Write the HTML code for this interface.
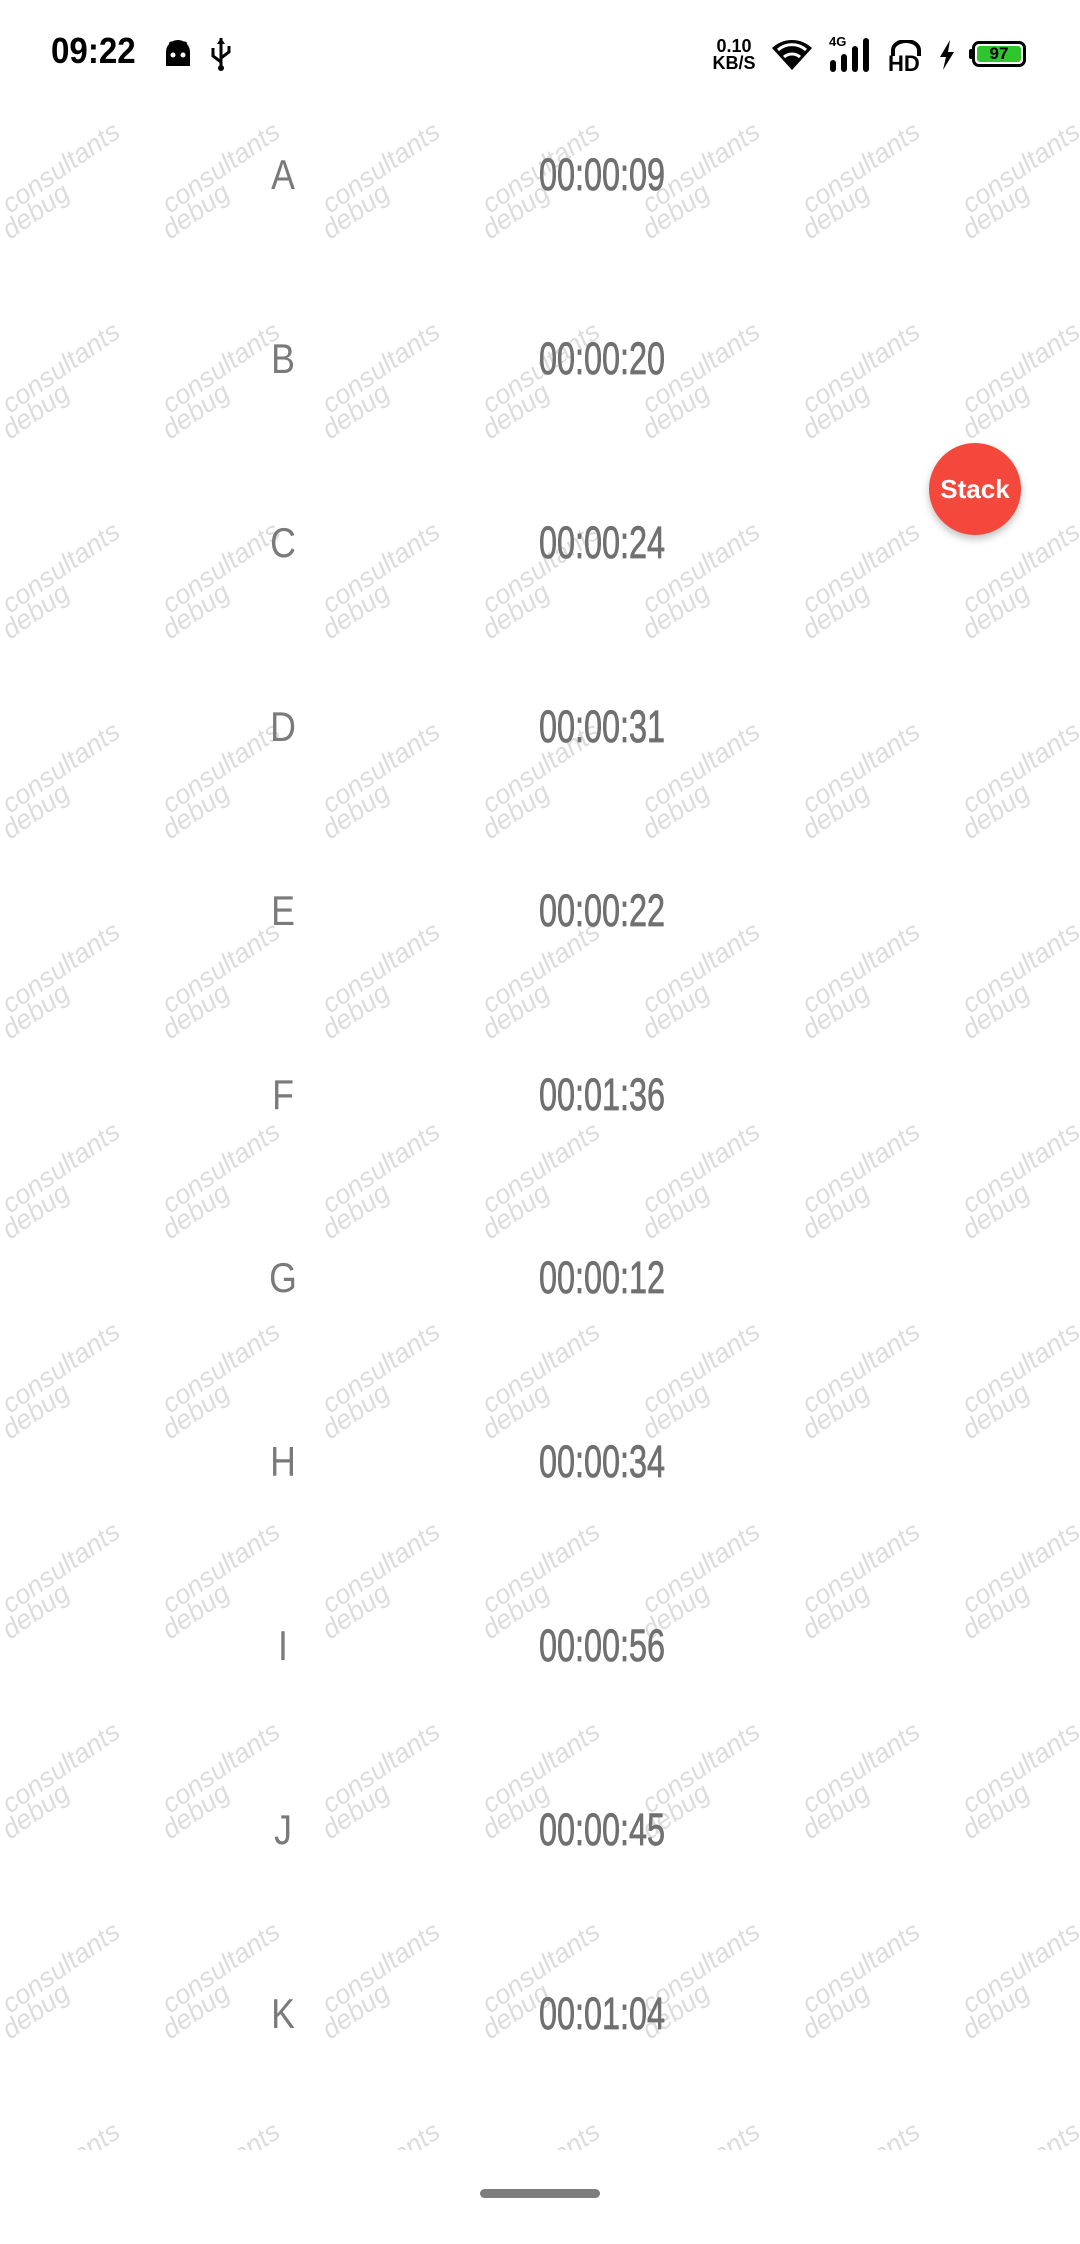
<!DOCTYPE html>
<html><head><meta charset="utf-8"><style>
html,body{margin:0;padding:0;}
body{width:1080px;height:2244px;position:relative;background:#fff;overflow:hidden;font-family:"Liberation Sans",sans-serif;}
.wm{position:absolute;left:0;top:0;}
.row{position:absolute;left:0;width:1080px;height:60px;}
.l{position:absolute;left:283px;top:0;transform:translateX(-50%) scaleX(0.85);font-size:42px;color:#7a7a7a;line-height:60px;}
.t{position:absolute;left:602px;top:0;transform:translateX(-50%) scaleX(0.72);font-size:45px;color:#707070;line-height:60px;white-space:nowrap;-webkit-text-stroke:0.8px #707070;}
.fab{position:absolute;left:929px;top:443px;width:92px;height:92px;border-radius:50%;background:#f3483b;box-shadow:0 4px 8px rgba(0,0,0,0.25);color:#fff;font-size:26px;text-align:center;line-height:92px;font-weight:bold;}
.sb{position:absolute;font-weight:bold;color:#000;}
</style></head><body>
<svg class="wm" width="1080" height="2150" viewBox="0 0 1080 2150">
<defs><pattern id="p" patternUnits="userSpaceOnUse" x="0" y="100" width="160" height="200">
<g font-family="Liberation Sans, sans-serif" font-style="italic" font-size="27" fill="#dcdcdc">
<text transform="translate(10,114) rotate(-35)">consultants</text>
<text transform="translate(10,140) rotate(-35)">debug</text>
</g></pattern></defs>
<rect x="0" y="100" width="1080" height="2050" fill="url(#p)"/>
</svg>

<div class="sb" style="left:51px;top:30px;font-size:36px;transform:scaleX(0.92);transform-origin:left;">09:22</div>
<svg style="position:absolute;left:162px;top:38px" width="32" height="32" viewBox="0 0 32 32"><path d="M4 28V14a12 12 0 0 1 24 0v14z" fill="#000"/><path d="M8 4l4 6M24 4l-4 6" stroke="#000" stroke-width="3"/><circle cx="11" cy="17" r="2.5" fill="#fff"/><circle cx="21" cy="17" r="2.5" fill="#fff"/></svg>
<svg style="position:absolute;left:208px;top:36px" width="26" height="36" viewBox="0 0 26 36"><path d="M13 2v32M13 26l-8-6V12M13 22l8-6V10" stroke="#000" stroke-width="3" fill="none"/><path d="M9 8l4-6 4 6z" fill="#000"/><circle cx="13" cy="32" r="3" fill="#000"/></svg>

<div class="sb" style="left:712px;top:38px;font-size:18px;line-height:17px;text-align:center;width:44px;">0.10<br>KB/S</div>
<svg style="position:absolute;left:772px;top:38px" width="40" height="34" viewBox="0 0 40 34"><path d="M20 32L0 10a29 29 0 0 1 40 0z" fill="#000"/><path d="M6 12a21 21 0 0 1 28 0" stroke="#fff" stroke-width="3" fill="none"/><path d="M12 19a12 12 0 0 1 16 0" stroke="#fff" stroke-width="3" fill="none"/></svg>
<div class="sb" style="left:829px;top:34px;font-size:13px;">4G</div>
<svg style="position:absolute;left:829px;top:38px" width="44" height="34" viewBox="0 0 44 34"><rect x="1" y="22" width="6" height="12" rx="3"/><rect x="12" y="16" width="6" height="18" rx="3"/><rect x="23" y="8" width="6" height="26" rx="3"/><rect x="34" y="0" width="6" height="34" rx="3"/></svg>
<svg style="position:absolute;left:889px;top:40px" width="34" height="16" viewBox="0 0 34 16"><path d="M4 16V10a13 9 0 0 1 26 0v6" stroke="#000" stroke-width="4" fill="none"/></svg>
<div class="sb" style="left:888px;top:51px;font-size:22px;">HD</div>
<svg style="position:absolute;left:938px;top:40px" width="18" height="30" viewBox="0 0 18 30"><path d="M12 0L2 17h6L5 30l11-18h-6z" fill="#000"/></svg>
<div style="position:absolute;left:972px;top:41px;width:54px;height:26px;border:3px solid #000;border-radius:7px;box-sizing:border-box;padding:2px;"><div style="background:#2ec52e;width:100%;height:100%;border-radius:3px;font-size:17px;text-align:center;line-height:16px;font-weight:bold;">97</div></div>
<div style="position:absolute;left:969px;top:49px;width:4px;height:10px;background:#000;border-radius:2px"></div>

<div class="row" style="top:145px"><span class="l">A</span><span class="t">00:00:09</span></div>
<div class="row" style="top:329px"><span class="l">B</span><span class="t">00:00:20</span></div>
<div class="row" style="top:513px"><span class="l">C</span><span class="t">00:00:24</span></div>
<div class="row" style="top:697px"><span class="l">D</span><span class="t">00:00:31</span></div>
<div class="row" style="top:881px"><span class="l">E</span><span class="t">00:00:22</span></div>
<div class="row" style="top:1065px"><span class="l">F</span><span class="t">00:01:36</span></div>
<div class="row" style="top:1248px"><span class="l">G</span><span class="t">00:00:12</span></div>
<div class="row" style="top:1432px"><span class="l">H</span><span class="t">00:00:34</span></div>
<div class="row" style="top:1616px"><span class="l">I</span><span class="t">00:00:56</span></div>
<div class="row" style="top:1800px"><span class="l">J</span><span class="t">00:00:45</span></div>
<div class="row" style="top:1984px"><span class="l">K</span><span class="t">00:01:04</span></div>

<div class="fab">Stack</div>
<div style="position:absolute;left:480px;top:2189px;width:120px;height:9px;border-radius:5px;background:#7d7d7d"></div>
</body></html>
